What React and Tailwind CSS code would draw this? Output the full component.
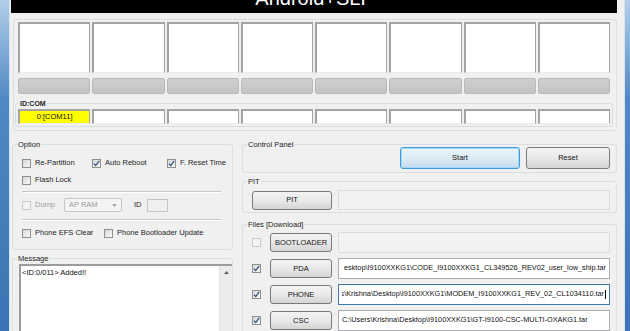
import React from 'react';

// Odin-style flasher window, cropped
const Check = ({ checked, disabled }) => (
  <span
    className={`w-[9px] h-[9px] shrink-0 flex items-center justify-center border ${
      disabled ? 'border-[#c9c9c9] bg-[#f4f4f4]' : 'border-[#8e8f8f] bg-gradient-to-br from-[#d6d8db] to-[#f8f8f8]'
    }`}
  >
    {checked && (
      <svg width="7" height="7" viewBox="0 0 7 7">
        <path d="M1 3.6 L2.7 5.6 L6.2 0.9" fill="none" stroke="#2b4a78" strokeWidth="1.2" />
      </svg>
    )}
  </span>
);

const Btn = ({ children, className = '' }) => (
  <div
    className={`shrink-0 flex items-center justify-center rounded-[3px] border border-[#7a7a7a] bg-gradient-to-b from-[#f3f3f3] via-[#e9e9e9] to-[#d4d4d4] text-[7.5px] text-[#151515] ${className}`}
  >
    {children}
  </div>
);

const Legend = ({ children, className = '' }) => (
  <legend className={`px-[1px] text-[7.5px] leading-[9px] text-[#1e1e1e] ${className}`}>{children}</legend>
);

const Opt = ({ label, checked, disabled, className = '' }) => (
  <div className={`flex items-center gap-[4px] h-[12px] ${className}`}>
    <Check checked={checked} disabled={disabled} />
    <span className={`text-[7.5px] whitespace-nowrap ${disabled ? 'text-[#a0a0a0]' : 'text-[#1e1e1e]'}`}>{label}</span>
  </div>
);

const PathField = ({ text, focused, end }) => (
  <div
    className={`flex-1 min-w-0 h-[21px] flex items-center px-[3px] bg-white border ${
      focused ? 'border-[#3d7bad]' : 'border-[#abadb3]'
    }`}
  >
    <div className={`flex-1 min-w-0 overflow-hidden flex ${end ? 'justify-end' : 'justify-start'}`}>
      <span className="whitespace-nowrap text-[7.3px] text-[#111] shrink-0">
        {text}
        {focused && <span className="inline-block w-px h-[9px] bg-black align-middle ml-px"></span>}
      </span>
    </div>
  </div>
);

export default function App() {
  const slots = [0, 1, 2, 3, 4, 5, 6, 7];
  // paths as they show in the boxes (scrolled to the end)
  const files = [
    { name: 'BOOTLOADER', checked: false, path: '' },
    { name: 'PDA', checked: true, path: 'esktop\\I9100XXKG1\\CODE_I9100XXKG1_CL349526_REV02_user_low_ship.tar', end: true },
    { name: 'PHONE', checked: true, path: 's\\Krishna\\Desktop\\I9100XXKG1\\MODEM_I9100XXKG1_REV_02_CL1034110.tar', end: true, focused: true },
    { name: 'CSC', checked: true, path: 'C:\\Users\\Krishna\\Desktop\\I9100XXKG1\\GT-I9100-CSC-MULTI-OXAKG1.tar' },
  ];

  return (
    <div className="w-[630px] h-[331px] overflow-hidden flex bg-[#f0f0f0] font-['Liberation_Sans',Arial,sans-serif]">
      {/* window frame left */}
      <div className="w-[9px] h-full shrink-0 bg-gradient-to-b from-[#b3cfe9] via-[#4f88c4] via-30% to-[#3a74b4]"></div>
      <div className="w-px h-full shrink-0 bg-[#d6e3f0]"></div>

      <div className="w-[614px] h-full shrink-0 flex flex-col">
        {/* banner */}
        <div className="ml-px w-[606px] h-[13px] shrink-0 bg-black overflow-hidden flex justify-center">
          <span className="-mt-[12px] text-[20px] leading-none text-white whitespace-nowrap">Android+SLF</span>
        </div>

        {/* device slots */}
        <div className="ml-[3px] mt-[6px] w-[604px] h-[112px] shrink-0 border border-[#d5dfe5] rounded-[3px] pt-[2px] pl-[4px]">
          <div className="w-[592px] grid grid-cols-8 gap-[2px]">
            {slots.map((i) => (
              <div key={i} className="h-[51px] bg-white border-t-2 border-l-2 border-r border-b border-[#a3a3a3] border-b-[#ececec]"></div>
            ))}
          </div>
          <div className="w-[592px] mt-[5px] grid grid-cols-8 gap-[2px]">
            {slots.map((i) => (
              <div key={i} className="h-[16px] rounded-[2px] border border-[#b9b9b9] bg-gradient-to-b from-[#cfcfcf] to-[#c4c4c4]"></div>
            ))}
          </div>
          <fieldset className="-ml-[3px] mt-[5px] w-[598px] border border-[#d5dfe5] rounded-[3px]">
            <Legend className="ml-[3px] font-bold text-[7px]">ID:COM</Legend>
            <div className="pl-[2px] pt-px pb-[2px]">
              <div className="w-[592px] grid grid-cols-8 gap-[2px]">
                {slots.map((i) => (
                  <div
                    key={i}
                    className={`h-[15px] flex items-center justify-center text-[7.5px] text-[#111] border-t-2 border-l-2 border-r border-b border-[#a3a3a3] border-b-[#ececec] ${
                      i === 0 ? 'bg-[#ffff00]' : 'bg-white'
                    }`}
                  >
                    {i === 0 ? '0:[COM11]' : ''}
                  </div>
                ))}
              </div>
            </div>
          </fieldset>
        </div>

        <div className="flex">
          {/* left column */}
          <div className="ml-[2px] w-[221px] shrink-0 flex flex-col">
            <fieldset className="mt-[9px] border border-[#d5dfe5] rounded-[3px]">
              <Legend className="ml-[4px]">Option</Legend>
              <div className="pl-[9px] pt-[8px] pb-[10px]">
                <div className="flex">
                  <Opt label="Re-Partition" className="w-[70px]" />
                  <Opt label="Auto Reboot" checked className="w-[75px]" />
                  <Opt label="F. Reset Time" checked />
                </div>
                <Opt label="Flash Lock" className="mt-[5px]" />
                <div className="mt-[5px] w-[199px] h-px bg-[#c8c8c8] border-b border-white box-content"></div>
                <div className="mt-[5px] h-[14px] flex items-center">
                  <Opt label="Dump" disabled className="w-[42px]" />
                  <div className="w-[58px] h-[14px] flex items-center justify-between px-[4px] border border-[#c6c6c6] rounded-[2px] bg-[#f4f4f4]">
                    <span className="text-[7.5px] text-[#9a9a9a]">AP RAM</span>
                    <svg width="5" height="3" viewBox="0 0 5 3">
                      <path d="M0 0 L5 0 L2.5 3 Z" fill="#a8a8a8" />
                    </svg>
                  </div>
                  <span className="ml-[12px] text-[7.5px] text-[#1e1e1e]">ID</span>
                  <div className="ml-[5px] w-[21px] h-[13px] border border-[#c6c6c6] bg-[#f0f0f0]"></div>
                </div>
                <div className="mt-[7px] w-[199px] h-px bg-[#c8c8c8] border-b border-white box-content"></div>
                <div className="mt-[6px] flex">
                  <Opt label="Phone EFS Clear" className="w-[82px]" />
                  <Opt label="Phone Bootloader Update" />
                </div>
              </div>
            </fieldset>

            <fieldset className="mt-[4px] h-[120px] border border-[#d5dfe5] rounded-[3px]">
              <Legend className="ml-[4px]">Message</Legend>
              <div className="pl-[6px] pt-px">
                <div className="h-[100px] flex bg-white border-t-2 border-l-2 border-[#9c9c9c]">
                  <div className="flex-1 pl-[1px] pt-[2px] text-[7.5px] text-[#111] leading-[10px]">&lt;ID:0/011&gt; Added!!</div>
                  <div className="w-[13px] bg-[#ececec] border-l border-[#e2e2e2] flex justify-center pt-[5px]">
                    <svg width="5" height="3" viewBox="0 0 5 3">
                      <path d="M0 3 L5 3 L2.5 0 Z" fill="#606060" />
                    </svg>
                  </div>
                </div>
              </div>
            </fieldset>
          </div>

          {/* right column */}
          <div className="ml-[9px] w-[375px] min-w-0 shrink-0 flex flex-col">
            <fieldset className="mt-[9px] min-w-0 border border-[#d5dfe5] rounded-[3px]">
              <Legend className="ml-[4px]">Control Panel</Legend>
              <div className="-mt-[2px] pb-[3px] pr-[6px] flex justify-end gap-[6px]">
                <div className="w-[120px] h-[22px] flex items-center justify-center rounded-[3px] border border-[#3c9fdb] bg-gradient-to-b from-[#eaf5fc] via-[#dcebf5] to-[#c6dced] text-[7.5px] text-[#151515] shadow-[inset_0_0_0_1px_#9fd6f5]">
                  Start
                </div>
                <Btn className="w-[84px] h-[22px]">Reset</Btn>
              </div>
            </fieldset>

            <fieldset className="mt-[4px] min-w-0 border border-[#d5dfe5] rounded-[3px]">
              <Legend className="ml-[4px]">PIT</Legend>
              <div className="pl-[9px] pr-[6px] pt-[4px] pb-[2px] flex items-center gap-[6px]">
                <Btn className="w-[80px] h-[19px]">PIT</Btn>
                <div className="flex-1 min-w-0 h-[20px] border border-[#dcdcdc] bg-[#f2f2f2]"></div>
              </div>
            </fieldset>

            <fieldset className="mt-[7px] min-w-0 h-[120px] border border-[#d5dfe5] rounded-[3px]">
              <Legend className="ml-[4px]">Files [Download]</Legend>
              <div className="pl-[9px] pr-[6px] pt-[3px] flex flex-col gap-[5px]">
                {files.map((f) => (
                  <div key={f.name} className="h-[21px] min-w-0 flex items-center">
                    <Check checked={f.checked} disabled={!f.checked} />
                    <Btn className="ml-[9px] w-[62px] h-[19px]">{f.name}</Btn>
                    <div className="ml-[6px] flex-1 min-w-0 flex">
                      {f.path ? (
                        <PathField text={f.path} end={f.end} focused={f.focused} />
                      ) : (
                        <div className="flex-1 h-[21px] border border-[#dcdcdc] bg-[#f2f2f2]"></div>
                      )}
                    </div>
                  </div>
                ))}
              </div>
            </fieldset>
          </div>
        </div>
      </div>

      {/* window frame right */}
      <div className="w-px h-full shrink-0 bg-[#d6e3f0]"></div>
      <div className="w-[5px] h-full shrink-0 bg-gradient-to-b from-[#b3cfe9] via-[#4f88c4] via-30% to-[#3a74b4]"></div>
    </div>
  );
}
